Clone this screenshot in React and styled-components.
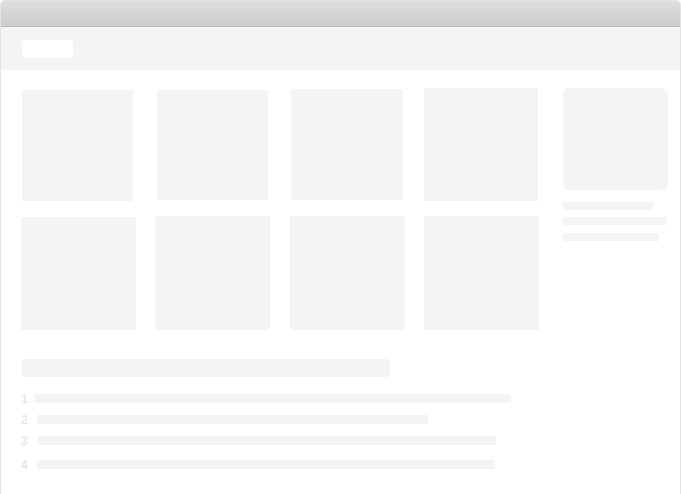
import React from "react";
import styled, { createGlobalStyle } from "styled-components";

const GlobalStyle = createGlobalStyle`
  html, body {
    margin: 0;
    padding: 0;
    background: #fff;
    font-family: "Liberation Sans", Arial, sans-serif;
  }
`;

const Frame = styled.div`
  box-sizing: border-box;
  width: 681px;
  height: 494px;
  border: 1px solid #e4e4e4;
  border-bottom: none;
  border-radius: 5px 5px 0 0;
  overflow: hidden;
  background: #fff;
`;

const TitleBar = styled.div`
  height: 25px;
  background: linear-gradient(#dedede, #cdcdcd);
  border-bottom: 1px solid #bcbcbc;
`;

const Header = styled.div`
  height: 43px;
  background: #f4f4f4;
  display: flex;
  align-items: center;
  padding-left: 21px;
`;

const Logo = styled.div`
  width: 51px;
  height: 18px;
  background: #fff;
  border-radius: 3px;
  margin-top: 1px;
`;

const Content = styled.div`
  display: flex;
  padding: 18px 0 0 20px;
`;

const Main = styled.div`
  width: 518px;
`;

const TileRow = styled.div`
  display: flex;
  align-items: flex-start;
  margin-top: ${(p) => p.$mt || 0}px;
`;

const Tile = styled.div`
  flex: none;
  width: ${(p) => p.$w}px;
  height: ${(p) => p.$h}px;
  margin-left: ${(p) => p.$ml || 0}px;
  margin-top: ${(p) => p.$mt || 0}px;
  background: #f4f4f4;
`;

const Sidebar = styled.div`
  width: 105px;
  margin-left: 24px;
`;

const Card = styled.div`
  height: 102px;
  background: #f4f4f4;
  border-radius: 6px;
`;

const Line = styled.div`
  width: ${(p) => p.$w}px;
  height: ${(p) => p.$h || 8}px;
  margin-top: ${(p) => p.$mt || 0}px;
  margin-left: ${(p) => p.$ml || 0}px;
  background: #f4f4f4;
`;

const Section = styled.div`
  padding: 29px 0 0 20px;
`;

const SectionTitle = styled.div`
  width: 368px;
  height: 18px;
  margin-left: 1px;
  background: #f4f4f4;
  border-radius: 3px;
`;

const List = styled.div`
  margin-top: 11px;
`;

const Item = styled.div`
  display: flex;
  align-items: center;
  height: 21px;
  margin-top: ${(p) => p.$mt || 0}px;
`;

const Num = styled.span`
  width: 8px;
  font-size: 12px;
  font-weight: bold;
  line-height: 12px;
  color: #e8e8e8;
`;

const tiles1 = [
  { w: 111, h: 111, ml: 1, mt: 2 },
  { w: 111, h: 110, ml: 24, mt: 2 },
  { w: 112, h: 111, ml: 23, mt: 1 },
  { w: 114, h: 113, ml: 21, mt: 0 },
];

const tiles2 = [
  { w: 115, h: 113, ml: 0, mt: 1 },
  { w: 115, h: 114, ml: 19, mt: 0 },
  { w: 115, h: 114, ml: 20, mt: 0 },
  { w: 115, h: 114, ml: 19, mt: 0 },
];

const items = [
  { n: 1, w: 476, ml: 6, mt: 0 },
  { n: 2, w: 391, ml: 8, mt: 0 },
  { n: 3, w: 458, ml: 9, mt: 0 },
  { n: 4, w: 458, ml: 8, mt: 3 },
];

export default function App() {
  return (
    <>
      <GlobalStyle />
      <Frame>
        <TitleBar />
        <Header>
          <Logo />
        </Header>
        <Content>
          <Main>
            <TileRow>
              {tiles1.map((t, i) => (
                <Tile key={i} $w={t.w} $h={t.h} $ml={t.ml} $mt={t.mt} />
              ))}
            </TileRow>
            <TileRow $mt={15}>
              {tiles2.map((t, i) => (
                <Tile key={i} $w={t.w} $h={t.h} $ml={t.ml} $mt={t.mt} />
              ))}
            </TileRow>
          </Main>
          <Sidebar>
            <Card />
            <Line $w={90} $mt={12} />
            <Line $w={103} $mt={7} />
            <Line $w={96} $mt={8} />
          </Sidebar>
        </Content>
        <Section>
          <SectionTitle />
          <List>
            {items.map((it) => (
              <Item key={it.n} $mt={it.mt}>
                <Num>{it.n}</Num>
                <Line $w={it.w} $h={9} $ml={it.ml} />
              </Item>
            ))}
          </List>
        </Section>
      </Frame>
    </>
  );
}
